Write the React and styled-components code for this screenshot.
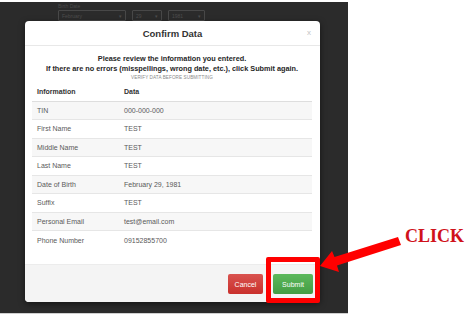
import React from "react";
import styled, { createGlobalStyle } from "styled-components";

const GlobalStyle = createGlobalStyle`
  html, body { margin: 0; padding: 0; background: #ffffff; }
  body { font-family: "Liberation Sans", Arial, sans-serif; }
`;

const Page = styled.div`
  position: relative;
  width: 474px;
  height: 317px;
  overflow: hidden;
  background: #ffffff;
`;

const Stage = styled.div`
  position: relative;
  width: 348px;
  height: 311px;
  margin-top: 2px;
  background: #2b2b2b;
  border-bottom: 1px solid #cfcfcf;
`;

const BgForm = styled.div`
  display: flex;
  flex-direction: column;
  gap: 1px;
  padding: 1px 0 0 58px;
  color: #4a4a4a;
  font-size: 5px;
`;

const BgSelects = styled.div`
  display: flex;
  gap: 6px;
`;

const BgSelect = styled.div`
  width: ${p => p.$w}px;
  height: 11px;
  border: 1px solid #484848;
  border-radius: 1px;
  display: flex;
  align-items: center;
  justify-content: space-between;
  padding: 0 3px;
  box-sizing: border-box;
  font-size: 5px;
  color: #4e4e4e;
`;

const Modal = styled.div`
  position: absolute;
  left: 25px;
  top: 19px;
  width: 295px;
  height: 281px;
  background: #ffffff;
  border-radius: 4px;
  display: flex;
  flex-direction: column;
  overflow: hidden;
  box-shadow: 0 2px 6px rgba(0, 0, 0, 0.5);
`;

const Header = styled.div`
  position: relative;
  height: 25px;
  flex: none;
  display: flex;
  align-items: center;
  justify-content: center;
  border-bottom: 1px solid #e8e8e8;
  box-sizing: border-box;
`;

const Title = styled.div`
  font-size: 9.5px;
  font-weight: bold;
  color: #333;
  margin-top: 1px;
`;

const Close = styled.span`
  position: absolute;
  right: 9px;
  top: 7px;
  font-size: 8px;
  color: #c4c4c4;
`;

const Body = styled.div`
  flex: 1;
  padding: 8px 8px 0 7px;
`;

const Intro = styled.div`
  text-align: center;
  font-size: 7.3px;
  line-height: 10px;
  font-weight: bold;
  color: #262626;
`;

const Verify = styled.div`
  text-align: center;
  font-size: 4.6px;
  line-height: 7px;
  color: #8a8a8a;
  letter-spacing: 0.1px;
`;

const Table = styled.table`
  width: 100%;
  margin-top: 2px;
  border-collapse: collapse;
  font-size: 7px;
  color: #5a5a5a;
`;

const Row = styled.tr`
  height: ${p => (p.$head ? 18 : 18.5)}px;
  background: ${p => (p.$striped ? "#f7f7f7" : "#ffffff")};
`;

const HeadCell = styled.th`
  text-align: left;
  font-weight: bold;
  color: #333;
  padding: 0 5px;
  width: ${p => p.$w || "auto"};
  border-bottom: 1px solid #dedede;
`;

const Cell = styled.td`
  padding: 0 5px;
  border-top: 1px solid #e6e6e6;
`;

const Footer = styled.div`
  height: 38px;
  flex: none;
  background: #f4f4f4;
  border-top: 1px solid #ececec;
  box-sizing: border-box;
  display: flex;
  align-items: center;
  justify-content: flex-end;
  gap: 10px;
  padding: 0 7px 0 0;
`;

const Button = styled.div`
  height: 20px;
  width: ${p => p.$w}px;
  border-radius: 2px;
  display: flex;
  align-items: center;
  justify-content: center;
  font-size: 7px;
  color: #fff;
  background: ${p => p.$bg};
  background-image: linear-gradient(${p => p.$top}, ${p => p.$bg});
  margin-top: 1px;
`;

const RedBox = styled.div`
  position: absolute;
  left: 266px;
  top: 257px;
  width: 54px;
  height: 46px;
  border: 5px solid #ff0000;
  box-sizing: border-box;
  border-radius: 2px;
`;

const Arrow = styled.svg`
  position: absolute;
  left: 0;
  top: 0;
`;

const Click = styled.div`
  position: absolute;
  left: 405px;
  top: 226px;
  font-family: "Liberation Serif", "Times New Roman", serif;
  font-weight: bold;
  font-size: 18px;
  color: #d0121b;
`;

const rows = [
  ["TIN", "000-000-000"],
  ["First Name", "TEST"],
  ["Middle Name", "TEST"],
  ["Last Name", "TEST"],
  ["Date of Birth", "February 29, 1981"],
  ["Suffix", "TEST"],
  ["Personal Email", "test@email.com"],
  ["Phone Number", "09152855700"],
];

export default function App() {
  return (
    <>
      <GlobalStyle />
      <Page>
        <Stage>
          <BgForm>
            <span>Birth Date</span>
            <BgSelects>
              <BgSelect $w={68}><span>February</span><span>▾</span></BgSelect>
              <BgSelect $w={30}><span>29</span><span>▾</span></BgSelect>
              <BgSelect $w={37}><span>1981</span><span>▾</span></BgSelect>
            </BgSelects>
          </BgForm>
          <Modal>
            <Header>
              <Title>Confirm Data</Title>
              <Close>x</Close>
            </Header>
            <Body>
              <Intro>
                Please review the information you entered.
                <br />
                If there are no errors (misspellings, wrong date, etc.), click Submit again.
              </Intro>
              <Verify>VERIFY DATA BEFORE SUBMITTING</Verify>
              <Table>
                <thead>
                  <Row $head>
                    <HeadCell $w="77px">Information</HeadCell>
                    <HeadCell>Data</HeadCell>
                  </Row>
                </thead>
                <tbody>
                  {rows.map(([k, v], i) => (
                    <Row key={k} $striped={i % 2 === 0}>
                      <Cell>{k}</Cell>
                      <Cell>{v}</Cell>
                    </Row>
                  ))}
                </tbody>
              </Table>
            </Body>
            <Footer>
              <Button $w={35} $bg="#c9302c" $top="#d9534f">Cancel</Button>
              <Button $w={40} $bg="#449d44" $top="#5cb85c">Submit</Button>
            </Footer>
          </Modal>
        </Stage>
        <RedBox />
        <Arrow width="474" height="317" viewBox="0 0 474 317">
          <polygon
            fill="#ff0000"
            points="320,266 332,251 334.5,257 398,237 401,245 337,265.5 339,272"
          />
        </Arrow>
        <Click>CLICK</Click>
      </Page>
    </>
  );
}
